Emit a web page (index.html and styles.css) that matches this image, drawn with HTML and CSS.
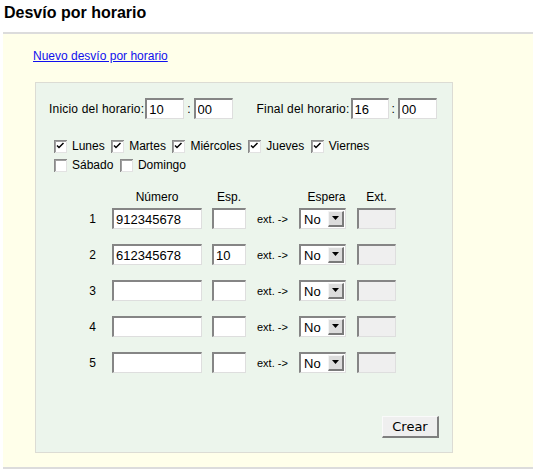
FILE: index.html
```html
<!DOCTYPE html>
<html lang="es">
<head>
<meta charset="utf-8">
<title>Desvío por horario</title>
<link rel="stylesheet" href="styles.css">
</head>
<body>
<h1 class="title">Desvío por horario</h1>
<div class="area">
  <a class="new-link" href="#">Nuevo desvío por horario</a>
  <div class="panel">
    <div class="time-row">
      <span class="lbl">Inicio del horario:</span>
      <input class="field time" type="text" value="10">
      <span class="colon">:</span>
      <input class="field time" type="text" value="00">
      <span class="lbl final">Final del horario:</span>
      <input class="field time short" type="text" value="16">
      <span class="colon">:</span>
      <input class="field time" type="text" value="00">
    </div>
    <div class="days">
      <div class="day-row">
        <span class="day"><span class="cb"><svg width="13" height="13" viewBox="0 0 13 13"><rect x="0" y="0" width="13" height="13" fill="#fff"/><path d="M0 0H13V1H1V13H0Z" fill="#8a8a8a"/><path d="M1 1H12V2H2V12H1Z" fill="#a0a0a0"/><path d="M12 1H13V13H1V12H12Z" fill="#e2e2e2"/><path d="M3 5.5L5 7.5L9.5 3" fill="none" stroke="#000" stroke-width="1.5"/></svg></span>Lunes</span>
        <span class="day"><span class="cb"><svg width="13" height="13" viewBox="0 0 13 13"><rect x="0" y="0" width="13" height="13" fill="#fff"/><path d="M0 0H13V1H1V13H0Z" fill="#8a8a8a"/><path d="M1 1H12V2H2V12H1Z" fill="#a0a0a0"/><path d="M12 1H13V13H1V12H12Z" fill="#e2e2e2"/><path d="M3 5.5L5 7.5L9.5 3" fill="none" stroke="#000" stroke-width="1.5"/></svg></span>Martes</span>
        <span class="day"><span class="cb"><svg width="13" height="13" viewBox="0 0 13 13"><rect x="0" y="0" width="13" height="13" fill="#fff"/><path d="M0 0H13V1H1V13H0Z" fill="#8a8a8a"/><path d="M1 1H12V2H2V12H1Z" fill="#a0a0a0"/><path d="M12 1H13V13H1V12H12Z" fill="#e2e2e2"/><path d="M3 5.5L5 7.5L9.5 3" fill="none" stroke="#000" stroke-width="1.5"/></svg></span>Miércoles</span>
        <span class="day"><span class="cb"><svg width="13" height="13" viewBox="0 0 13 13"><rect x="0" y="0" width="13" height="13" fill="#fff"/><path d="M0 0H13V1H1V13H0Z" fill="#8a8a8a"/><path d="M1 1H12V2H2V12H1Z" fill="#a0a0a0"/><path d="M12 1H13V13H1V12H12Z" fill="#e2e2e2"/><path d="M3 5.5L5 7.5L9.5 3" fill="none" stroke="#000" stroke-width="1.5"/></svg></span>Jueves</span>
        <span class="day"><span class="cb"><svg width="13" height="13" viewBox="0 0 13 13"><rect x="0" y="0" width="13" height="13" fill="#fff"/><path d="M0 0H13V1H1V13H0Z" fill="#8a8a8a"/><path d="M1 1H12V2H2V12H1Z" fill="#a0a0a0"/><path d="M12 1H13V13H1V12H12Z" fill="#e2e2e2"/><path d="M3 5.5L5 7.5L9.5 3" fill="none" stroke="#000" stroke-width="1.5"/></svg></span>Viernes</span>
      </div>
      <div class="day-row second">
        <span class="day"><span class="cb"><svg width="13" height="13" viewBox="0 0 13 13"><rect x="0" y="0" width="13" height="13" fill="#fff"/><path d="M0 0H13V1H1V13H0Z" fill="#8a8a8a"/><path d="M1 1H12V2H2V12H1Z" fill="#a0a0a0"/><path d="M12 1H13V13H1V12H12Z" fill="#e2e2e2"/></svg></span>Sábado</span>
        <span class="day"><span class="cb"><svg width="13" height="13" viewBox="0 0 13 13"><rect x="0" y="0" width="13" height="13" fill="#fff"/><path d="M0 0H13V1H1V13H0Z" fill="#8a8a8a"/><path d="M1 1H12V2H2V12H1Z" fill="#a0a0a0"/><path d="M12 1H13V13H1V12H12Z" fill="#e2e2e2"/></svg></span>Domingo</span>
      </div>
    </div>

    <div class="trow thead">
      <span></span>
      <span class="h w-num">Número</span>
      <span class="h w-esp">Esp.</span>
      <span></span>
      <span class="h w-sel espera">Espera</span>
      <span class="h w-ext">Ext.</span>
    </div>

    <div class="rows">
      <div class="trow">
        <span class="idx">1</span>
        <input class="field w-num" type="text" value="912345678">
        <input class="field w-esp" type="text" value="">
        <span class="arrow-txt">ext. -&gt;</span>
        <span class="sel"><span class="sel-val">No</span><span class="sel-btn"><svg width="8" height="5" viewBox="0 0 8 5"><path d="M0 0H7L3.5 4Z" fill="#000"/></svg></span></span>
        <input class="field w-ext dis" type="text" value="" disabled>
      </div>
      <div class="trow">
        <span class="idx">2</span>
        <input class="field w-num" type="text" value="612345678">
        <input class="field w-esp" type="text" value="10">
        <span class="arrow-txt">ext. -&gt;</span>
        <span class="sel"><span class="sel-val">No</span><span class="sel-btn"><svg width="8" height="5" viewBox="0 0 8 5"><path d="M0 0H7L3.5 4Z" fill="#000"/></svg></span></span>
        <input class="field w-ext dis" type="text" value="" disabled>
      </div>
      <div class="trow">
        <span class="idx">3</span>
        <input class="field w-num" type="text" value="">
        <input class="field w-esp" type="text" value="">
        <span class="arrow-txt">ext. -&gt;</span>
        <span class="sel"><span class="sel-val">No</span><span class="sel-btn"><svg width="8" height="5" viewBox="0 0 8 5"><path d="M0 0H7L3.5 4Z" fill="#000"/></svg></span></span>
        <input class="field w-ext dis" type="text" value="" disabled>
      </div>
      <div class="trow">
        <span class="idx">4</span>
        <input class="field w-num" type="text" value="">
        <input class="field w-esp" type="text" value="">
        <span class="arrow-txt">ext. -&gt;</span>
        <span class="sel"><span class="sel-val">No</span><span class="sel-btn"><svg width="8" height="5" viewBox="0 0 8 5"><path d="M0 0H7L3.5 4Z" fill="#000"/></svg></span></span>
        <input class="field w-ext dis" type="text" value="" disabled>
      </div>
      <div class="trow">
        <span class="idx">5</span>
        <input class="field w-num" type="text" value="">
        <input class="field w-esp" type="text" value="">
        <span class="arrow-txt">ext. -&gt;</span>
        <span class="sel"><span class="sel-val">No</span><span class="sel-btn"><svg width="8" height="5" viewBox="0 0 8 5"><path d="M0 0H7L3.5 4Z" fill="#000"/></svg></span></span>
        <input class="field w-ext dis" type="text" value="" disabled>
      </div>
    </div>

    <div class="actions">
      <button class="btn" type="button">Crear</button>
    </div>
  </div>
</div>
</body>
</html>
```
FILE: styles.css
```css
* { box-sizing: border-box; }

html, body {
  margin: 0;
  padding: 0;
  background: #ffffff;
}

body {
  font-family: "Liberation Sans", Arial, sans-serif;
  font-size: 12px;
  color: #000;
}

.title {
  margin: 0;
  padding: 4px 4px 10px 4px;
  font-size: 16px;
  line-height: 18px;
  font-weight: bold;
  color: #000;
}

.area {
  margin-left: 3px;
  width: 530px;
  background: #ffffea;
  border-top: 2px solid #dcdcdc;
  border-bottom: 2px solid #dcdcdc;
  padding: 15px 0 14px 30px;
}

.new-link {
  display: block;
  width: max-content;
  line-height: 14px;
  color: #1010ee;
  text-decoration: underline;
}

.panel {
  margin-top: 19px;
  margin-left: 2px;
  width: 418px;
  border: 1px solid #dcdcd4;
  background: #ecf5ec;
  padding: 15px 13px 14px 12px;
}

.time-row {
  display: flex;
  align-items: center;
  height: 21px;
}

.lbl {
  line-height: 14px;
  padding-left: 1px;
  margin-right: 1px;
  letter-spacing: 0.2px;
}

.lbl.final {
  margin-left: 23px;
}

.colon {
  margin: 0 3px;
}

.field {
  height: 21px;
  padding: 0 2px;
  margin: 0;
  font-family: "Liberation Sans", Arial, sans-serif;
  font-size: 13px;
  color: #000;
  background: #fff;
  border-top: 2px solid #858585;
  border-left: 2px solid #858585;
  border-right: 1px solid #dedede;
  border-bottom: 1px solid #dedede;
  border-radius: 0;
  outline: none;
}

.field.time { width: 39px; }
.field.time.short { width: 38px; }

.days {
  margin-top: 18px;
}

.day-row {
  display: flex;
  align-items: center;
  height: 18px;
  padding-left: 6px;
}

.day-row.second {
  margin-top: 1px;
}

.day {
  display: inline-flex;
  align-items: center;
  margin-right: 6.5px;
  line-height: 14px;
}

.cb {
  display: inline-flex;
  width: 13px;
  height: 13px;
  margin-right: 5px;
}

.trow {
  display: grid;
  grid-template-columns: 64px 100px 44px 43px 58px 39px;
  align-items: center;
  height: 21px;
}

.thead {
  margin-top: 16px;
  height: 14px;
  line-height: 14px;
}

.h {
  text-align: center;
}

.w-num { width: 90px; }
.w-esp { width: 34px; }
.w-sel { width: 47px; }
.w-ext { width: 39px; }

.espera {
  padding-left: 8px;
}

.rows {
  margin-top: 4px;
  display: flex;
  flex-direction: column;
  gap: 15px;
}

.idx {
  text-align: right;
  padding-right: 16px;
  line-height: 14px;
}

.arrow-txt {
  font-size: 11px;
  line-height: 14px;
  padding-left: 1px;
}

.field.dis {
  background: #efefef;
}

.sel {
  display: flex;
  align-items: center;
  justify-content: space-between;
  width: 47px;
  height: 21px;
  background: #fff;
  border-top: 2px solid #858585;
  border-left: 2px solid #858585;
  border-right: 1px solid #dedede;
  border-bottom: 1px solid #dedede;
  padding: 0 1px 0 3px;
}

.sel-val {
  font-size: 13px;
  line-height: 15px;
}

.sel-btn {
  display: flex;
  align-items: center;
  justify-content: center;
  width: 16px;
  height: 16px;
  background: #dcdcdc;
  border-top: 1px solid #f4f4f4;
  border-left: 1px solid #f4f4f4;
  border-right: 2px solid #7a7a7a;
  border-bottom: 2px solid #7a7a7a;
}

.sel-btn svg { display: block; }

.actions {
  display: flex;
  justify-content: flex-end;
  margin-top: 43px;
}

.btn {
  width: 57px;
  height: 22px;
  padding: 0;
  margin: 0;
  font-family: "DejaVu Sans", sans-serif;
  font-size: 13px;
  color: #000;
  background: #efefef;
  border-top: 1px solid #fafafa;
  border-left: 1px solid #fafafa;
  border-right: 2px solid #7f7f7f;
  border-bottom: 2px solid #7f7f7f;
  border-radius: 0;
}
```
